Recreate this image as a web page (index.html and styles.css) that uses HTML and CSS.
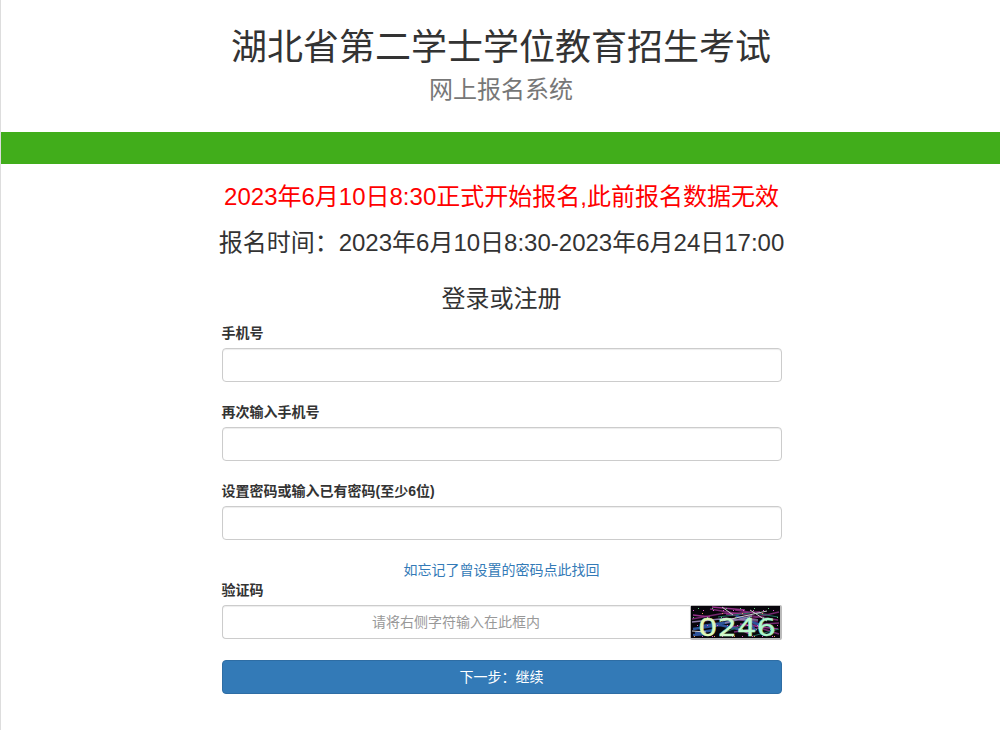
FILE: index.html
```html
<!DOCTYPE html>
<html lang="zh-CN">
<head>
  <meta charset="UTF-8" />
  <title>湖北省第二学士学位教育招生考试</title>
  <link rel="stylesheet" href="styles.css">
</head>
<body>
  <header class="page-header">
    <h1>湖北省第二学士学位教育招生考试</h1>
    <p class="subtitle">网上报名系统</p>
  </header>
  <div class="bar"></div>

  <main class="container">
    <h3 class="notice">2023年6月10日8:30正式开始报名,此前报名数据无效</h3>
    <h3 class="period">报名时间：2023年6月10日8:30-2023年6月24日17:00</h3>

    <form class="login-form">
      <h3 class="form-title">登录或注册</h3>
      <div class="form-group">
        <label for="phone">手机号</label>
        <input type="text" id="phone" class="form-control">
      </div>
      <div class="form-group">
        <label for="phone2">再次输入手机号</label>
        <input type="text" id="phone2" class="form-control">
      </div>
      <div class="form-group">
        <label for="password">设置密码或输入已有密码(至少6位)</label>
        <input type="password" id="password" class="form-control">
      </div>
      <a href="#" class="forgot">如忘记了曾设置的密码点此找回</a>
      <div class="form-group">
        <label for="code">验证码</label>
        <div class="input-group">
          <input type="text" id="code" class="form-control" placeholder="请将右侧字符输入在此框内">
          <svg class="captcha" width="92" height="35" viewBox="0 0 92 35">
            <defs>
              <linearGradient id="ink" gradientUnits="userSpaceOnUse" x1="8" y1="0" x2="86" y2="0">
                <stop offset="0" stop-color="#e9f8b0"/>
                <stop offset=".4" stop-color="#c8fad0"/>
                <stop offset="1" stop-color="#a2f5cb"/>
              </linearGradient>
            </defs>
            <rect width="92" height="35" rx="2" fill="#bbb"/>
            <rect x="1" y="1" width="89" height="32" fill="#08060c"/>
            <!-- noise -->
            <g fill="none" stroke-width="1.5">
              <path stroke="#73286e" d="M2 14L35 8L60 14L89 7M20 4L50 9L88 15M38 22L89 18M44 27L70 23L89 29M33 13L68 17M45 5L80 10"/>
              <path stroke="#94318a" d="M22 2L55 5M36 9L70 7M50 19L88 24M3 10L20 12M40 20L60 29"/>
              <path stroke="#2c5399" d="M3 24L30 20L48 24M5 28L24 25M12 21L40 17M46 11L70 20M55 12L66 26M3 30L16 29" stroke-width="2.5"/>
              <path stroke="#247061" d="M28 12L60 8M64 8L88 12M30 29L54 20M63 31L89 24" stroke-width="1"/>
              <path stroke="#8b7caa" d="M2 17L30 14L68 15M35 18L62 11"/>
              <path stroke="#ccc" d="M32 2L43 10M32 16L77 6M60 5L77 16M2 26L16 27" stroke-width="1"/>
            </g>
            <g fill="none" stroke-width="1">
              <path stroke="#e45ad0" stroke-dasharray="1 9" d="M3 5.5H88M7 20.5H88M12 31.5H88"/>
              <path stroke="#65d07f" stroke-dasharray="1 13" d="M8 3.5H88M3 12.5H88M10 24.5H88"/>
              <path stroke="#e8a052" stroke-dasharray="1 19" d="M12 8.5H88M4 31.5H88"/>
            </g>
            <text x="8" y="31" textLength="78" lengthAdjust="spacingAndGlyphs">0246</text>
          </svg>
        </div>
      </div>
      <button type="button" class="btn-primary">下一步：继续</button>
    </form>
  </main>
</body>
</html>
```
FILE: styles.css
```css
* {
  box-sizing: border-box;
}

body {
  margin: 0;
  min-height: 100vh;
  border-left: 1px solid #ddd;
  font-family: "Liberation Sans", "Noto Sans CJK SC", sans-serif;
  font-size: 14px;
  line-height: 20px;
  color: #333;
  background-color: #fff;
}

h1, h3, p {
  margin: 0;
  font-weight: normal;
  text-align: center;
}

.page-header {
  height: 132px;
  padding: 28px 0 0 1px;
}

h1 {
  font-size: 36px;
  line-height: 40px;
}

.subtitle {
  margin-top: 9px;
  font-size: 24px;
  line-height: 26px;
  color: #777;
}

.bar {
  height: 32px;
  background-color: #41ad1b;
}

.container {
  padding: 20px 0 0 2px;
}

h3 {
  font-size: 24px;
  line-height: 26px;
}

.notice {
  color: #f00;
}

.period {
  margin-top: 20px;
}

.login-form {
  width: 560px;
  margin: 30px auto 0;
}

.form-title {
  margin-bottom: 11px;
}

.form-group {
  margin-bottom: 20px;
}

label {
  display: block;
  margin-bottom: 5px;
  font-weight: bold;
}

.form-control {
  display: block;
  width: 100%;
  height: 34px;
  padding: 6px 12px;
  font: inherit;
  text-align: center;
  color: #555;
  border: 1px solid #ccc;
  border-radius: 4px;
  box-shadow: inset 0 1px 1px rgba(0, 0, 0, .075);
}

.form-control::placeholder {
  color: #999;
}

.forgot {
  display: block;
  text-align: center;
  color: #337ab7;
  text-decoration: none;
}

.input-group {
  display: flex;
}

.input-group .form-control {
  flex: 1;
  border-right: 0;
  border-radius: 4px 0 0 4px;
}

.captcha {
  display: block;
  overflow: visible;
}

.captcha text {
  font-family: "DejaVu Sans", sans-serif;
  font-size: 24px;
  fill: url(#ink);
  stroke: url(#ink);
  stroke-width: .3px;
}

.btn-primary {
  display: block;
  width: 100%;
  height: 34px;
  font: inherit;
  color: #fff;
  background-color: #337ab7;
  border: 1px solid #2e6da4;
  border-radius: 4px;
}
```
